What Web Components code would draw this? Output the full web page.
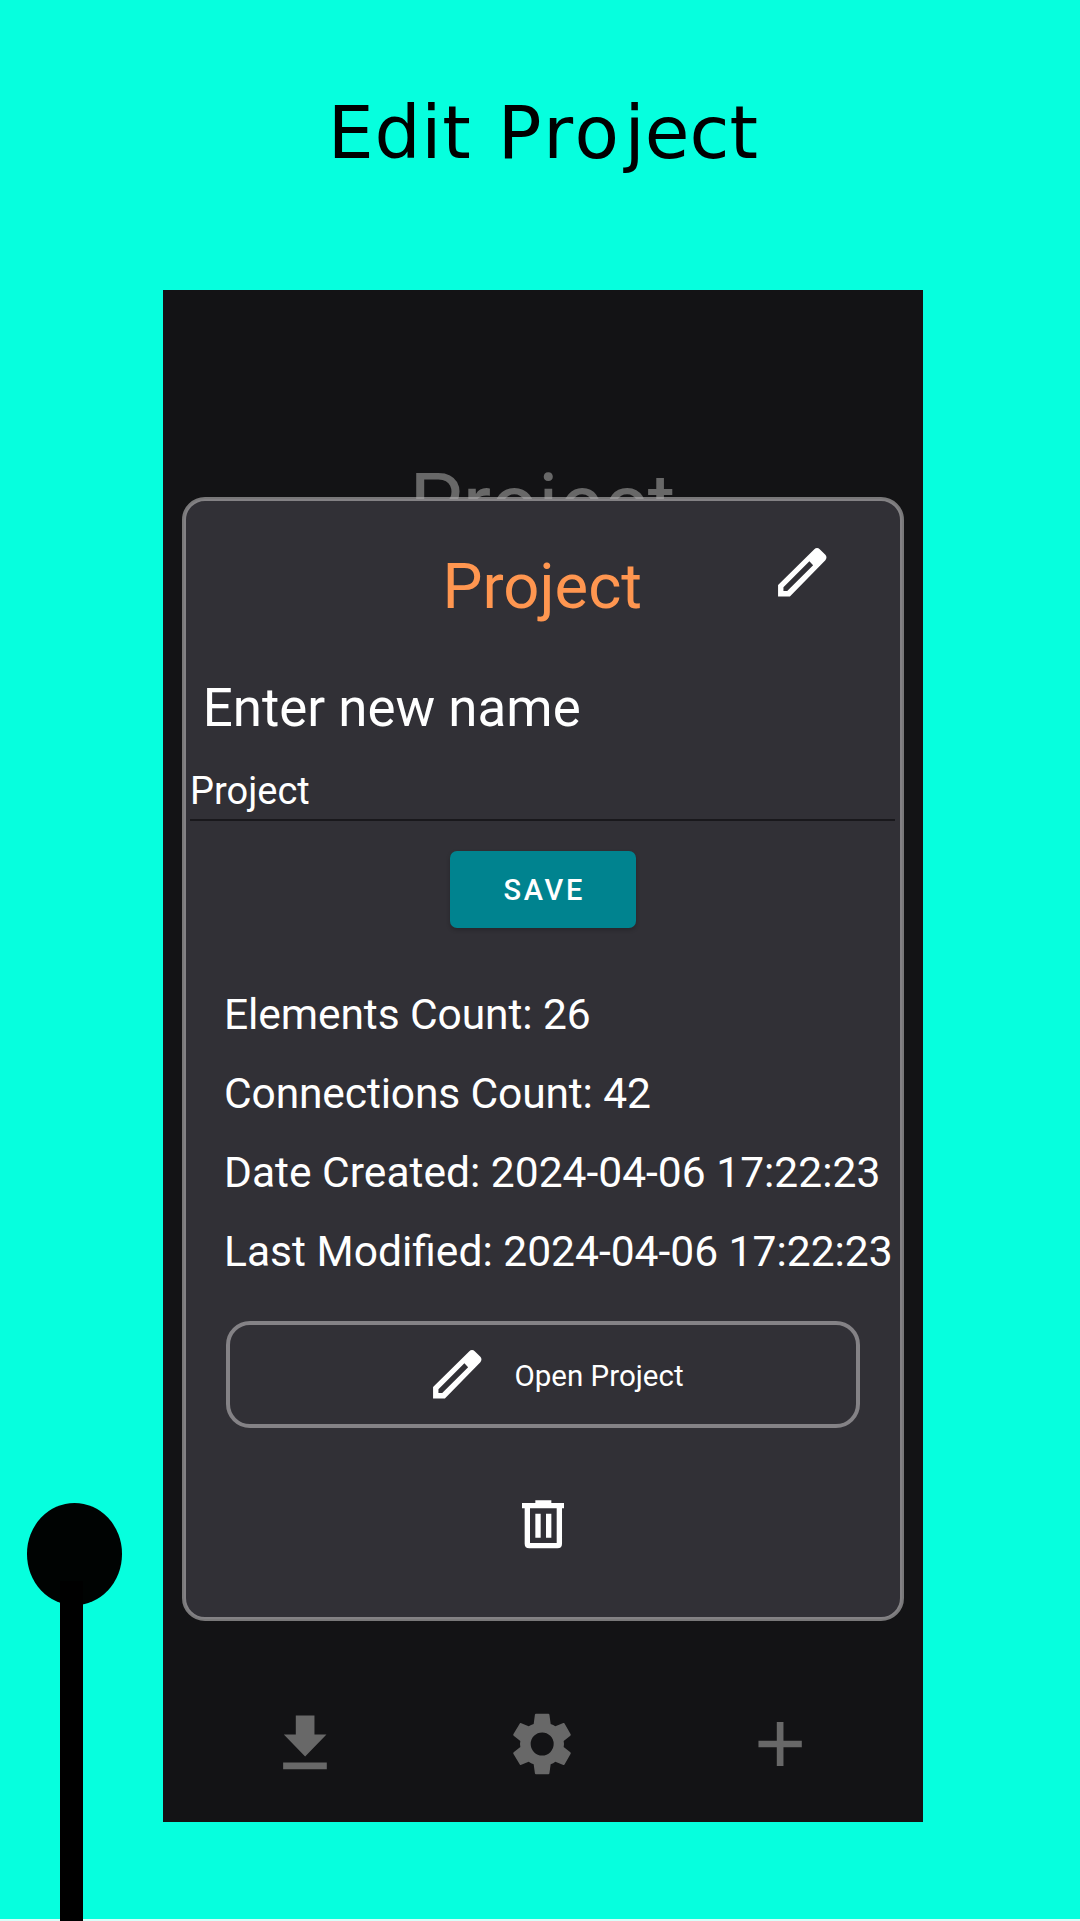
<!DOCTYPE html>
<html lang="en">
<head>
<meta charset="utf-8">
<title>Edit Project</title>
<style>
html,body{margin:0;padding:0;background:#d9fff9}
body{width:1080px;height:1921px;overflow:hidden;font-family:Roboto,"Liberation Sans",sans-serif}
</style>
</head>
<body>
<promo-page>
  <promo-title slot="title"></promo-title>
  <phone-screen>
    <screen-heading slot="heading">Project</screen-heading>
    <tab-bar slot="tabs"></tab-bar>
    <project-dialog slot="dialog">
      <dialog-header slot="header">Project</dialog-header>
      <name-field label="Enter new name" value="Project"></name-field>
      <save-button>SAVE</save-button>
      <info-list>
        <info-row style="letter-spacing:-.1px">Elements Count: 26</info-row>
        <info-row style="letter-spacing:-.15px">Connections Count: 42</info-row>
        <info-row>Date Created: 2024-04-06 17:22:23</info-row>
        <info-row>Last Modified: 2024-04-06 17:22:23</info-row>
      </info-list>
      <open-button>Open Project</open-button>
      <app-icon class="trash" name="trash" style="--w:42.7px;--h:48.7px;margin:72px 0 0 .6px;align-self:center"></app-icon>
    </project-dialog>
  </phone-screen>
  <pin-mark slot="mark"></pin-mark>
</promo-page>
<script>
function define(name, markup, setup) {
  customElements.define(name, class extends HTMLElement {
    constructor() {
      super();
      this.attachShadow({ mode: 'open' });
    }
    connectedCallback() {
      this.shadowRoot.innerHTML = markup;
      if (setup) setup(this, this.shadowRoot);
    }
  });
}

const ICONS = {
  pencil: ['0 0 24 24', '<path fill-rule="evenodd" d="M16.5 3.4C17.05 2.85 17.95 2.85 18.5 3.4L20.6 5.5C21.15 6.05 21.15 6.95 20.6 7.5L7.4 21H3V16.7ZM14.65 7.95L5 17.6V19H6.4L16.05 9.35Z"/>'],
  trash: ['0 0 16 18', '<path fill-rule="evenodd" d="M5 0H11V1H16V3H15V16.3Q15 18 13.3 18H2.7Q1 18 1 16.3V3H0V1H5ZM3 3V16H13V3ZM5 5H7V14H5ZM9 5H11V14H9Z"/>'],
  download: ['72.6 100.2 186 186', '<path d="M138 108H194V165H230L166 231L102 165H138ZM100 249H231V269H100Z"/>'],
  gear: ['784 100 186 186', '<path fill-rule="evenodd" d="M859 102H896Q899 102 899.300 105L903 133Q911 136 917 140L941 130Q944 129 945 132L963 164Q964 166 962 168L942 184Q944 193 942 202L962 218Q964 220 963 222L945 254Q944 257 941 256L917 246Q911 251 903 254L899.300 281Q899 284 896 284H859Q856 284 855.700 281L852 254Q844 251 837 246L813 256Q811 257 810 254L791 222Q790 220 792 218L812 202Q810 193 812 184L792 168Q790 166 791 164L810 132Q811 129 813 130L837 140Q844 136 852 133L855.700 105Q856 102 859 102ZM877.500 158.500A34.500 34.500 0 1 0 877.500 227.500A34.500 34.500 0 1 0 877.500 158.500Z"/>'],
  plus: ['87.6 370 186 186', '<path d="M171 397H191V453H246V473H191V529H171V473H116V453H171Z"/>']
};

define('app-icon', `<style>
:host{display:block;flex:none;width:var(--w,62px);height:var(--h,62px)}
svg{display:block;width:100%;height:100%;fill:currentColor}
</style><svg aria-hidden="true"></svg>`, (el, root) => {
  const [box, body] = ICONS[el.getAttribute('name')];
  const svg = root.querySelector('svg');
  svg.setAttribute('viewBox', box);
  svg.innerHTML = body;
});

define('promo-page', `<style>
:host{display:flex;flex-direction:column;position:relative;width:1080px;height:1919px;background:#06ffde}
</style><slot name="title"></slot><slot></slot><slot name="mark"></slot>`);

define('promo-title', `<style>
:host{display:block;height:289.5px}
h1{margin:0;padding-left:327.7px;font:400 72.7px/266px "DejaVu Sans",sans-serif;color:#000;white-space:nowrap;font-kerning:none}
.a{letter-spacing:.8px;word-spacing:2.3px}
.b{letter-spacing:1.5px}
.c{margin-left:4px}
</style><h1><span class="a">Edit </span><span class="b">Pro</span><span class="c">ject</span></h1>`);

define('phone-screen', `<style>
:host{display:flex;flex-direction:column;justify-content:space-between;position:relative;margin-left:163px;width:759.6px;height:1532.1px;background:#131315}
</style><slot name="heading"></slot><slot name="tabs"></slot><slot name="dialog"></slot>`);

define('screen-heading', `<style>
:host{display:block;padding:166px 1px 0 0;font-size:84.5px;line-height:100px;text-align:center;color:#686868}
</style><slot></slot>`);

define('tab-bar', `<style>
:host{display:flex;height:154.8px;padding:0 24px 0 23px;color:#686868}
div{flex:1;display:flex;align-items:center;justify-content:center}
</style><div><app-icon name="download"></app-icon></div><div><app-icon name="gear"></app-icon></div><div><app-icon name="plus"></app-icon></div>`);

/* The translucent outline straddles the edge of the panel fill. */
define('project-dialog', `<style>
:host{position:absolute;left:19px;top:207.6px;width:721.5px;height:1124px;box-sizing:border-box;border:4px solid transparent;display:flex;flex-direction:column;color:#fff;isolation:isolate}
.fill{position:absolute;inset:-2px;border-radius:21px;background:#313036;z-index:-2}
.outline{position:absolute;inset:-4px;border:4px solid rgba(172,170,171,.67);border-radius:23px;z-index:-1}
</style><div class="fill"></div><div class="outline"></div><slot name="header"></slot><slot></slot>`);

define('dialog-header', `<style>
:host{display:grid;height:171.9px;align-items:start}
h2{grid-area:1/1;margin:45.3px 1px 0 0;font-weight:400;font-size:63.4px;line-height:80px;text-align:center;color:#ff9650}
app-icon{--w:64.5px;--h:64.5px;grid-area:1/1;justify-self:end;margin:39px 65px 0 0}
</style><h2><slot></slot></h2><app-icon name="pencil"></app-icon>`);

define('name-field', `<style>
:host{display:block}
.label{padding-left:16.8px;font-size:52.85px;line-height:70px}
.value{margin:22.7px 4.4px 0 4px;height:53.3px;border-bottom:2px solid #19181c;font-size:38px;line-height:50px}
</style><div class="label"></div><div class="value"></div>`, (el, root) => {
  root.querySelector('.label').textContent = el.getAttribute('label');
  root.querySelector('.value').textContent = el.getAttribute('value');
});

define('save-button', `<style>
:host{display:flex;align-self:center;align-items:center;justify-content:center;box-sizing:border-box;margin-top:29.7px;padding:2px 0 0 3px;width:185.7px;height:77px;border-radius:7px;background:#00838f;box-shadow:0 2px 4px rgba(0,0,0,.22);font-weight:500;font-size:29px;letter-spacing:2.7px}
</style><slot></slot>`);

define('info-list', `<style>
:host{display:flex;flex-direction:column;margin-top:47.2px;padding-left:38px}
</style><slot></slot>`);

define('info-row', `<style>
:host{display:block;height:79.2px;font-size:42.55px;line-height:79.2px;white-space:nowrap}
</style><slot></slot>`);

define('open-button', `<style>
:host{display:flex;align-items:center;gap:24.7px;box-sizing:border-box;margin:29.6px 40px 0;height:106.7px;padding-left:195.3px;border:4.3px solid #848286;border-radius:24px;font-size:29.5px}
app-icon{--w:64.5px;--h:64.5px}
span{padding-top:2px}
</style><app-icon name="pencil"></app-icon><span><slot></slot></span>`);

define('pin-mark', `<style>
:host{position:absolute;left:26.7px;top:1503px;width:95px;height:418px;display:block}
.head{width:95px;height:101.500px;border-radius:50%;background:#000302}
.stem{margin:-23.8px 0 0 33.3px;width:22.8px;height:341px;background:#000}
</style><div class="head"></div><div class="stem"></div>`);
</script>
</body>
</html>
